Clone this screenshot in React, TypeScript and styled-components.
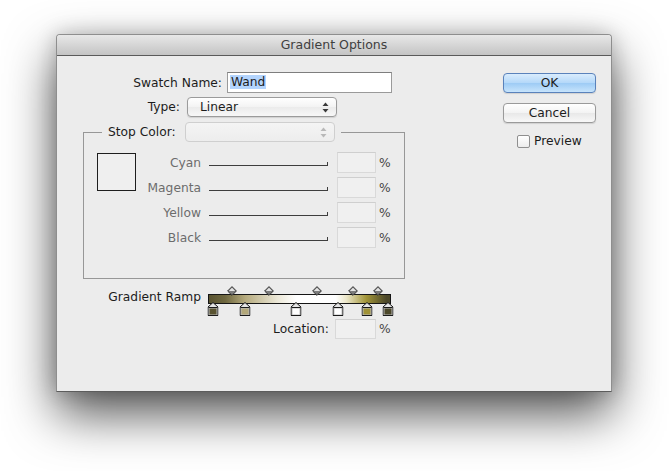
import styled, { createGlobalStyle } from "styled-components";

const GlobalStyle = createGlobalStyle`
  html, body {
    margin: 0;
    padding: 0;
    background: #ffffff;
  }
  body {
    font-family: "DejaVu Sans", "Liberation Sans", sans-serif;
    font-size: 12.25px;
    color: #1c1c1c;
  }
`;

const channels = ["Cyan", "Magenta", "Yellow", "Black"];

// location in px along the 183px ramp, like the stops a user drags
const stops = [
  { at: 5, color: "#5a5431" },
  { at: 37, color: "#b3a87a" },
  { at: 88, color: "#ffffff" },
  { at: 130, color: "#ffffff" },
  { at: 159, color: "#a09236" },
  { at: 180, color: "#4c482a" },
];

const midpoints = [24, 61, 109, 145, 170];

function UpDownArrows({ faded }: { faded?: boolean }) {
  const c = faded ? "#b8b8b8" : "#3a3a3a";
  return (
    <svg width="7" height="11" viewBox="0 0 7 11">
      <path d="M3.5 0.5 L6.5 4 L0.5 4 Z" fill={c} />
      <path d="M3.5 10.5 L6.5 7 L0.5 7 Z" fill={c} />
    </svg>
  );
}

function StopMarker({ color }: { color: string }) {
  return (
    <svg width="11" height="14" viewBox="0 0 11 14">
      <path d="M5.5 0.5 L10.5 5 L10.5 13.5 L0.5 13.5 L0.5 5 Z" fill="#bdbdbd" stroke="#1a1a1a" />
      <path d="M5.5 1.6 L9.4 5 L1.6 5 Z" fill="#e6e6e6" />
      <rect x="1" y="5" width="9" height="1" fill="#1a1a1a" />
      <rect x="2" y="6.5" width="7" height="6" fill={color} />
    </svg>
  );
}

function Midpoint() {
  return (
    <svg width="10" height="10" viewBox="0 0 10 10">
      <path d="M5 0.6 L9.4 5 L5 9.4 L0.6 5 Z" fill="#7c7c7c" stroke="#2e2e2e" strokeWidth="0.9" />
      <path d="M5 1.8 L8.2 5 L1.8 5 Z" fill="#e4e4e4" />
    </svg>
  );
}

export default function App() {
  return (
    <>
      <GlobalStyle />
      <Page>
        <Window>
          <TitleBar>Gradient Options</TitleBar>
          <Body>
            <LeftColumn>
              <Row>
                <Label width={165}>Swatch Name:</Label>
                <TextField>
                  <Selected>Wand</Selected>
                </TextField>
              </Row>
              <Row $top={4}>
                <Label width={123} $gap={7}>Type:</Label>
                <PopUp>
                  <span>Linear</span>
                  <UpDownArrows />
                </PopUp>
              </Row>

              <Group>
                <Legend>
                  <LegendLabel>Stop Color:</LegendLabel>
                  <PopUp disabled>
                    <span />
                    <UpDownArrows faded />
                  </PopUp>
                </Legend>
                <GroupContent>
                  <Swatch />
                  <ChannelList>
                    {channels.map((name) => (
                      <ChannelRow key={name}>
                        <ChannelLabel>{name}</ChannelLabel>
                        <Slider />
                        <NumberField $left={9} />
                        <Percent>%</Percent>
                      </ChannelRow>
                    ))}
                  </ChannelList>
                </GroupContent>
              </Group>

              <RampRow>
                <RampLabel>Gradient Ramp</RampLabel>
                <Ramp>
                  {midpoints.map((x) => (
                    <MidpointPin key={x} style={{ left: x }}>
                      <Midpoint />
                    </MidpointPin>
                  ))}
                  <RampBar />
                  {stops.map((s, i) => (
                    <StopPin key={i} style={{ left: s.at }}>
                      <StopMarker color={s.color} />
                    </StopPin>
                  ))}
                </Ramp>
              </RampRow>

              <Row $top={3}>
                <Label width={272} $gap={6}>Location:</Label>
                <NumberField $width={41} $height={20} />
                <Percent>%</Percent>
              </Row>
            </LeftColumn>

            <RightColumn>
              <Button $primary>OK</Button>
              <Button>Cancel</Button>
              <CheckRow>
                <CheckBox />
                <span>Preview</span>
              </CheckRow>
            </RightColumn>
          </Body>
        </Window>
      </Page>
    </>
  );
}

const Page = styled.div`
  padding: 34px 0 0 56px;
  height: 437px;
  overflow: hidden;
`;

const Window = styled.div`
  box-sizing: border-box;
  width: 556px;
  height: 358px;
  background: #ececec;
  border: 1px solid #8e8e8e;
  border-bottom-color: #5c5c5c;
  border-radius: 4px 4px 0 0;
  box-shadow: 0 22px 50px rgba(0, 0, 0, 0.68), 0 0 20px rgba(0, 0, 0, 0.2);
`;

const TitleBar = styled.div`
  height: 20px;
  line-height: 20px;
  text-align: center;
  color: #404040;
  font-size: 12.5px;
  border-radius: 3px 3px 0 0;
  background: linear-gradient(#e8e8e8, #d2d2d2 60%, #c4c4c4);
  border-bottom: 1px solid #5a5a5a;
`;

const Body = styled.div`
  display: flex;
  padding-top: 16px;
`;

const LeftColumn = styled.div`
  width: 446px;
  display: flex;
  flex-direction: column;
`;

const Row = styled.div<{ $top?: number }>`
  display: flex;
  align-items: center;
  margin-top: ${(p) => p.$top ?? 0}px;
`;

const Label = styled.div<{ width: number; $gap?: number }>`
  width: ${(p) => p.width}px;
  margin-right: ${(p) => p.$gap ?? 5}px;
  text-align: right;
  white-space: nowrap;
  color: #1c1c1c;
`;

const TextField = styled.div`
  box-sizing: border-box;
  width: 165px;
  height: 21px;
  padding: 2px 2px;
  background: #ffffff;
  border: 1px solid #9a9a9a;
  border-top-color: #7e7e7e;
  line-height: 15px;
`;

const Selected = styled.span`
  background: #b3d4fd;
  padding: 0 1px;
`;

const PopUp = styled.div<{ disabled?: boolean }>`
  box-sizing: border-box;
  width: 150px;
  height: 20px;
  padding: 0 7px 0 12px;
  display: flex;
  align-items: center;
  justify-content: space-between;
  border-radius: 4px;
  border: 1px solid ${(p) => (p.disabled ? "#cfcfcf" : "#9b9b9b")};
  background: ${(p) =>
    p.disabled
      ? "linear-gradient(#f4f4f4, #ededed)"
      : "linear-gradient(#ffffff, #f3f3f3 50%, #ebebeb 51%, #f7f7f7)"};
  box-shadow: ${(p) => (p.disabled ? "none" : "0 1px 1px rgba(0,0,0,0.12)")};
`;

const Group = styled.fieldset`
  box-sizing: border-box;
  width: 322px;
  margin: 5px 0 0 26px;
  padding: 0;
  border: 1px solid #979797;
  min-width: 0;
`;

const Legend = styled.legend`
  display: flex;
  align-items: center;
  margin-left: 18px;
  padding: 0 6px;
`;

const LegendLabel = styled.span`
  min-width: 71px;
  margin-right: 6px;
`;

const GroupContent = styled.div`
  display: flex;
  align-items: flex-start;
  padding: 10px 0 30px 13px;
`;

const Swatch = styled.div`
  box-sizing: border-box;
  width: 39px;
  height: 38px;
  margin-top: 1px;
  border: 1px solid #1e1e1e;
  background: #efefef;
`;

const ChannelList = styled.div`
  display: flex;
  flex-direction: column;
  gap: 4px;
`;

const ChannelRow = styled.div`
  display: flex;
  align-items: center;
  height: 21px;
`;

const ChannelLabel = styled.div`
  width: 65px;
  text-align: right;
  color: #6c6c6c;
`;

const Slider = styled.div`
  box-sizing: border-box;
  width: 119px;
  height: 4px;
  margin: 3px 0 0 8px;
  border-bottom: 1px solid #3e3e3e;
  border-right: 1px solid #3e3e3e;
`;

const NumberField = styled.div<{ $width?: number; $height?: number; $left?: number }>`
  box-sizing: border-box;
  width: ${(p) => p.$width ?? 39}px;
  height: ${(p) => p.$height ?? 21}px;
  margin-left: ${(p) => p.$left ?? 0}px;
  background: #f0f0f0;
  border: 1px solid #d9d9d9;
  border-top-color: #cfcfcf;
`;

const Percent = styled.span`
  margin-left: 3px;
  color: #444444;
`;

const RampRow = styled.div`
  display: flex;
  align-items: flex-start;
  margin-top: 7px;
  padding-left: 51px;
`;

const RampLabel = styled.div`
  width: 93px;
  margin: 4px 7px 0 0;
  text-align: right;
  white-space: nowrap;
`;

const Ramp = styled.div`
  position: relative;
  width: 183px;
  height: 30px;
  padding-top: 8px;
  box-sizing: border-box;
`;

const RampBar = styled.div`
  box-sizing: border-box;
  height: 10px;
  border: 1px solid #151515;
  background: linear-gradient(
    to right,
    #58522f 0%,
    #6f6840 9%,
    #b5aa7d 20%,
    #ece8d8 38%,
    #ffffff 48%,
    #ffffff 70%,
    #ebe6c8 76%,
    #a19437 87%,
    #4c482a 98%
  );
`;

const MidpointPin = styled.div`
  position: absolute;
  top: 0;
  width: 10px;
  height: 10px;
  transform: translateX(-50%);
  line-height: 0;
`;

const StopPin = styled.div`
  position: absolute;
  top: 16px;
  width: 11px;
  height: 14px;
  transform: translateX(-50%);
  line-height: 0;
`;

const RightColumn = styled.div`
  width: 93px;
  display: flex;
  flex-direction: column;
  gap: 10px;
  padding-top: 1px;
`;

const Button = styled.div<{ $primary?: boolean }>`
  box-sizing: border-box;
  height: 20px;
  line-height: 18px;
  text-align: center;
  border-radius: 4px;
  border: 1px solid ${(p) => (p.$primary ? "#5a82bb" : "#9a9a9a")};
  background: ${(p) =>
    p.$primary
      ? "linear-gradient(#d9ecfd, #b4d8f9 50%, #9dcbf5 51%, #c7e4fc)"
      : "linear-gradient(#ffffff, #f3f3f3 50%, #e8e8e8 51%, #f8f8f8)"};
  box-shadow: 0 1px 1px rgba(0, 0, 0, 0.12);
`;

const CheckRow = styled.div`
  display: flex;
  align-items: center;
  gap: 4px;
  padding-left: 14px;
  margin-top: 1px;
`;

const CheckBox = styled.div`
  box-sizing: border-box;
  width: 13px;
  height: 13px;
  border-radius: 2px;
  border: 1px solid #8f8f8f;
  background: linear-gradient(#ffffff, #ececec);
`;
